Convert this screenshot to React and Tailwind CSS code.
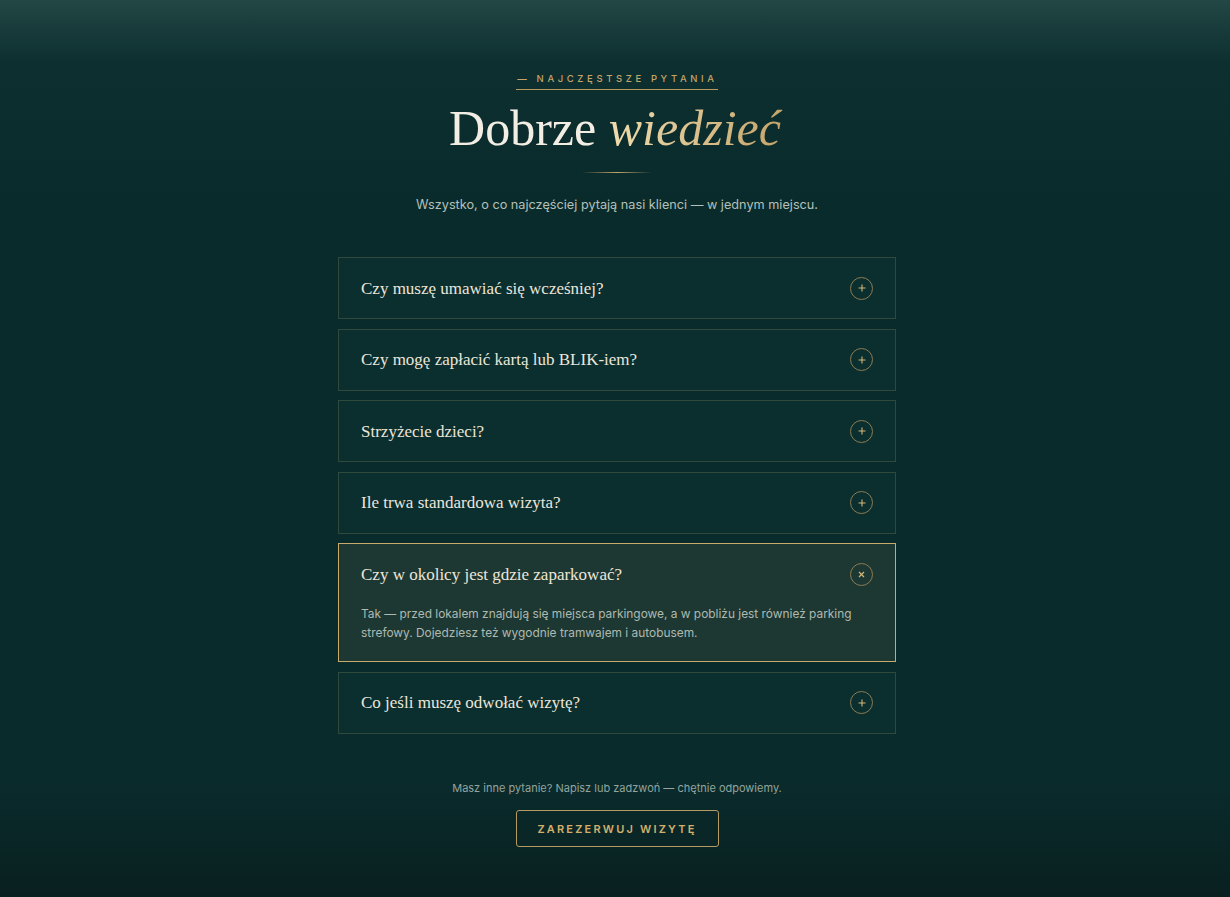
import React, { useState } from 'react';

const faqs = [
    { q: 'Czy muszę umawiać się wcześniej?', a: 'Zalecamy wcześniejszą rezerwację, ale zawsze postaramy się przyjąć Cię od ręki.' },
    { q: 'Czy mogę zapłacić kartą lub BLIK-iem?', a: 'Tak, akceptujemy karty płatnicze, BLIK oraz gotówkę.' },
    { q: 'Strzyżecie dzieci?', a: 'Oczywiście — strzyżemy dzieci w każdym wieku.' },
    { q: 'Ile trwa standardowa wizyta?', a: 'Standardowa wizyta trwa od 30 do 60 minut.' },
    { q: 'Czy w okolicy jest gdzie zaparkować?', a: 'Tak — przed lokalem znajdują się miejsca parkingowe, a w pobliżu jest również parking strefowy. Dojedziesz też wygodnie tramwajem i autobusem.' },
    { q: 'Co jeśli muszę odwołać wizytę?', a: 'Daj nam znać najpóźniej 24 godziny wcześniej.' },
];

const serif = { fontFamily: '"Liberation Serif", "DejaVu Serif", serif' };

const FaqItem = ({ item, open, onToggle }) => (
    <div
        className={
            open
                ? 'border border-[#c9aa6b] bg-[#1d3832]'
                : 'border border-[#2f4a3c] bg-[#0b2e2e]'
        }
    >
        <button
            onClick={onToggle}
            className="w-full h-[60px] flex items-center justify-between pl-[22px] pr-[22px] text-left"
        >
            <span className="text-[17px] text-[#ece6da]" style={serif}>
                {item.q}
            </span>
            <span className="w-[23px] h-[23px] rounded-full border border-[#8a7d55] flex items-center justify-center text-[#d2b67a]">
                {open ? (
                    <svg width="7" height="7" viewBox="0 0 7 7"><path d="M1 1L6 6M6 1L1 6" stroke="currentColor" strokeWidth="1.2" /></svg>
                ) : (
                    <svg width="8" height="8" viewBox="0 0 8 8"><path d="M4 0.5V7.5M0.5 4H7.5" stroke="currentColor" strokeWidth="1.1" /></svg>
                )}
            </span>
        </button>
        {open && (
            <p className="px-[22px] pb-[19px] text-[11.9px] leading-[19px] text-[#aeb9b1]">
                {item.a}
            </p>
        )}
    </div>
);

const App = () => {
    const [openIdx, setOpenIdx] = useState(4);

    return (
        <div
            className="min-h-[897px] w-full pl-[4px] bg-[linear-gradient(180deg,#224744_0px,#0d2f30_62px,#0a2b2c_200px,#0a2b2c_780px,#09201f_897px)] flex flex-col items-center"
            style={{ fontFamily: 'Inter, "Liberation Sans", sans-serif' }}
        >
            <div className="pt-[72px] flex flex-col items-center">
                <div className="text-[9.5px] tracking-[0.38em] text-[#c4a469] font-medium pb-[3px] border-b border-[#b89a5e] pl-[1px]">
                    — NAJCZĘSTSZE PYTANIA
                </div>
                <h1 className="mt-[8px] text-[50px] leading-[60px] text-[#f3eee4]" style={serif}>
                    Dobrze{' '}
                    <em className="italic bg-[linear-gradient(90deg,#efdcae,#c4a46a)] bg-clip-text text-transparent pr-1">
                        wiedzieć
                    </em>
                </h1>
                <div className="mt-[14px] w-[70px] h-px bg-[linear-gradient(90deg,transparent,#c4a46a,transparent)]" />
                <p className="mt-[22px] text-[12.7px] text-[#b3c0b9]">
                    Wszystko, o co najczęściej pytają nasi klienci — w jednym miejscu.
                </p>
            </div>

            <div className="mt-[43px] w-[558px] flex flex-col gap-[9.5px]">
                {faqs.map((item, i) => (
                    <FaqItem
                        key={i}
                        item={item}
                        open={openIdx === i}
                        onToggle={() => setOpenIdx(openIdx === i ? -1 : i)}
                    />
                ))}
            </div>

            <p className="mt-[46px] text-[11px] text-[#93a49d]">
                Masz inne pytanie? Napisz lub zadzwoń — chętnie odpowiemy.
            </p>
            <button className="mt-[14px] w-[203px] h-[37px] border border-[#b59a62] rounded-[3px] text-[11px] font-semibold tracking-[0.2em] text-[#d2b06c]">
                ZAREZERWUJ WIZYTĘ
            </button>
        </div>
    );
};

export default App;
